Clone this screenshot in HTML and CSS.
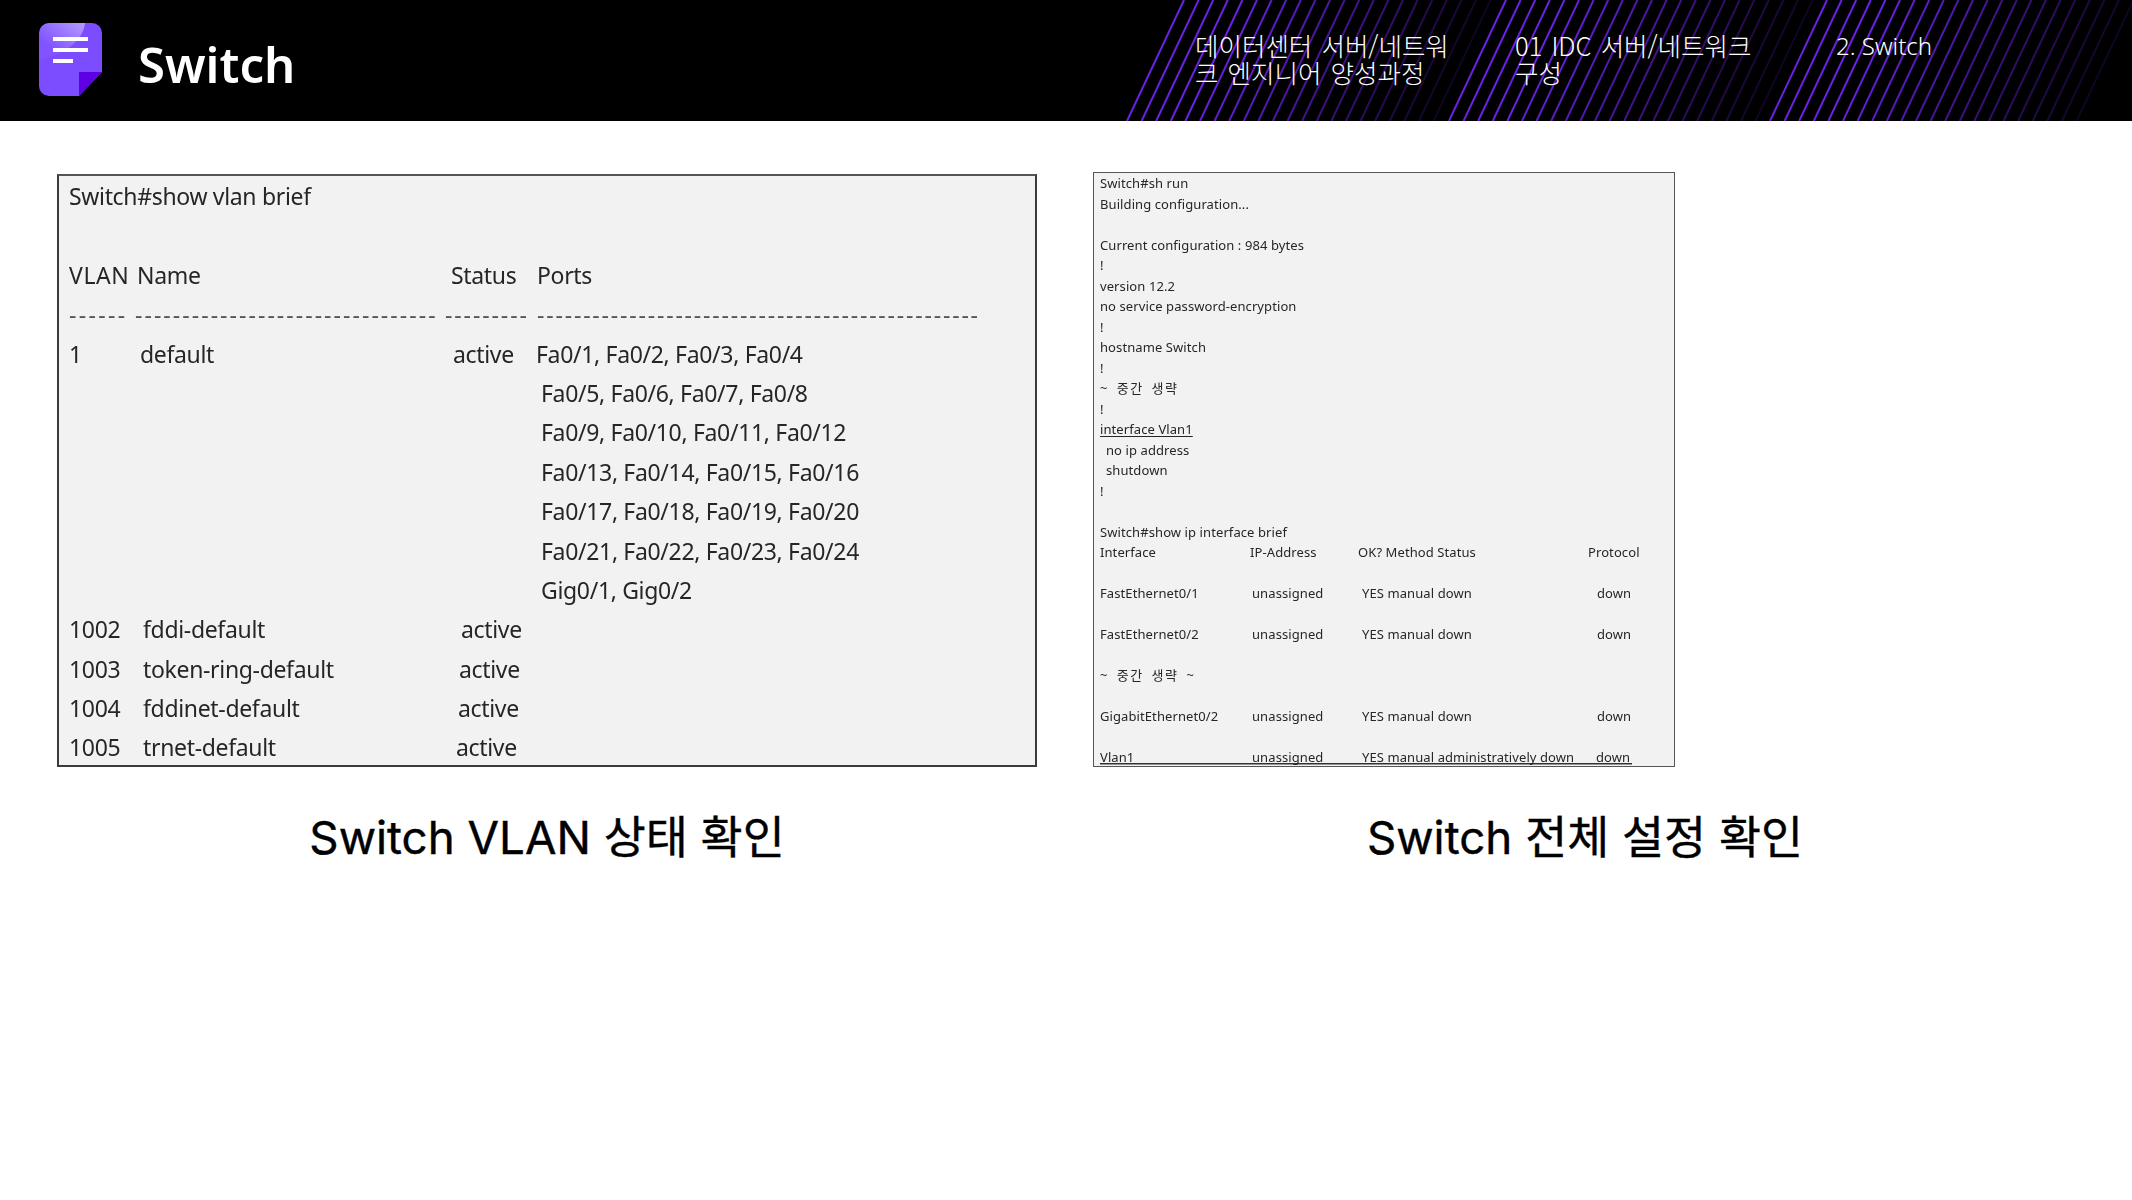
FILE: index.html
```html
<!DOCTYPE html>
<html lang="ko">
<head>
<meta charset="utf-8">
<title>Switch</title>
<link rel="stylesheet" href="styles.css">
</head>
<body>
<header class="topbar">
  <svg class="stripes" viewBox="0 0 2132 121" width="2132" height="121" aria-hidden="true">
    <defs>
      <g id="stripe-group" stroke="#6a22e6" stroke-width="2">
        <line x1="0" y1="121" x2="57" y2="0"/>
        <line x1="14.6" y1="121" x2="71.6" y2="0"/>
        <line x1="29.2" y1="121" x2="86.2" y2="0"/>
        <line x1="43.8" y1="121" x2="100.8" y2="0"/>
        <line x1="58.4" y1="121" x2="115.4" y2="0"/>
        <line x1="73" y1="121" x2="130" y2="0" opacity=".95"/>
        <line x1="87.6" y1="121" x2="144.6" y2="0" opacity=".9"/>
        <line x1="102.2" y1="121" x2="159.2" y2="0" opacity=".85"/>
        <line x1="116.8" y1="121" x2="173.8" y2="0" opacity=".8"/>
        <line x1="131.4" y1="121" x2="188.4" y2="0" opacity=".75"/>
        <line x1="146" y1="121" x2="203" y2="0" opacity=".7"/>
        <line x1="160.6" y1="121" x2="217.6" y2="0" opacity=".65"/>
        <line x1="175.2" y1="121" x2="232.2" y2="0" opacity=".6"/>
        <line x1="189.8" y1="121" x2="246.8" y2="0" opacity=".55"/>
        <line x1="204.4" y1="121" x2="261.4" y2="0" opacity=".5"/>
        <line x1="219" y1="121" x2="276" y2="0" opacity=".45"/>
        <line x1="233.6" y1="121" x2="290.6" y2="0" opacity=".4"/>
        <line x1="248.2" y1="121" x2="305.2" y2="0" opacity=".35"/>
        <line x1="262.8" y1="121" x2="319.8" y2="0" opacity=".3"/>
        <line x1="277.4" y1="121" x2="334.4" y2="0" opacity=".25"/>
        <line x1="292" y1="121" x2="349" y2="0" opacity=".2"/>
        <line x1="306.6" y1="121" x2="363.6" y2="0" opacity=".15"/>
      </g>
    </defs>
    <use href="#stripe-group" x="1127"/>
    <use href="#stripe-group" x="1449"/>
    <use href="#stripe-group" x="1770"/>
  </svg>
  <svg class="logo" viewBox="0 0 63 73" width="63" height="73" aria-hidden="true">
    <defs>
      <linearGradient id="shine" x1="1" y1="0" x2="0" y2="1">
        <stop offset="0" stop-color="#fff" stop-opacity=".45"/>
        <stop offset=".7" stop-color="#fff" stop-opacity=".04"/>
      </linearGradient>
    </defs>
    <path d="M10 0H53A10 10 0 0 1 63 10V49L40 73H10A10 10 0 0 1 0 63V10A10 10 0 0 1 10 0Z" fill="#7c4dff"/>
    <path d="M10 0H46C44 18 26 31 0 37V10A10 10 0 0 1 10 0Z" fill="url(#shine)"/>
    <path d="M40 49H63L40 73Z" fill="#5d00e4"/>
    <rect x="14" y="14" width="35" height="4" fill="#fff"/>
    <rect x="14" y="25" width="35" height="4" fill="#fff"/>
    <rect x="14" y="36" width="20" height="4" fill="#fff"/>
  </svg>
  <h1 class="title">Switch</h1>
  <nav class="crumbs">
    <div class="crumb crumb-a">데이터센터 서버/네트워크 엔지니어 양성과정</div>
    <div class="crumb crumb-b">01 IDC 서버/네트워크 구성</div>
    <div class="crumb crumb-c">2. Switch</div>
  </nav>
</header>
<main class="slide">
  <figure class="panel panel-left">
    <div class="term term-vlan">
      <div class="vrow">Switch#show vlan brief</div>
      <div class="vrow"></div>
      <div class="vrow vgrid"><span class="vl">VLAN</span><span>Name</span><span>Status</span><span>Ports</span></div>
      <div class="vrow vgrid dashes"><span class="d1">------</span><span class="d2">--------------------------------</span><span class="d3">---------</span><span class="d4">------------------------------------------------</span></div>
      <div class="vrow vgrid"><span>1</span><span class="n1">default</span><span class="a0">active</span><span class="p0">Fa0/1, Fa0/2, Fa0/3, Fa0/4</span></div>
      <div class="vrow vgrid"><span></span><span></span><span></span><span class="p1">Fa0/5, Fa0/6, Fa0/7, Fa0/8</span></div>
      <div class="vrow vgrid"><span></span><span></span><span></span><span class="p1">Fa0/9, Fa0/10, Fa0/11, Fa0/12</span></div>
      <div class="vrow vgrid"><span></span><span></span><span></span><span class="p1">Fa0/13, Fa0/14, Fa0/15, Fa0/16</span></div>
      <div class="vrow vgrid"><span></span><span></span><span></span><span class="p1">Fa0/17, Fa0/18, Fa0/19, Fa0/20</span></div>
      <div class="vrow vgrid"><span></span><span></span><span></span><span class="p1">Fa0/21, Fa0/22, Fa0/23, Fa0/24</span></div>
      <div class="vrow vgrid"><span></span><span></span><span></span><span class="p1">Gig0/1, Gig0/2</span></div>
      <div class="vrow vgrid"><span>1002</span><span class="n2">fddi-default</span><span class="a1">active</span></div>
      <div class="vrow vgrid"><span>1003</span><span class="n2">token-ring-default</span><span class="a2">active</span></div>
      <div class="vrow vgrid"><span>1004</span><span class="n2">fddinet-default</span><span class="a3">active</span></div>
      <div class="vrow vgrid"><span>1005</span><span class="n2">trnet-default</span><span class="a4">active</span></div>
    </div>
    <figcaption class="caption">Switch VLAN 상태 확인</figcaption>
  </figure>
  <figure class="panel panel-right">
    <div class="term term-conf">
      <div class="crow">Switch#sh run</div>
      <div class="crow">Building configuration...</div>
      <div class="crow"></div>
      <div class="crow">Current configuration : 984 bytes</div>
      <div class="crow">!</div>
      <div class="crow">version 12.2</div>
      <div class="crow">no service password-encryption</div>
      <div class="crow">!</div>
      <div class="crow">hostname Switch</div>
      <div class="crow">!</div>
      <div class="crow ko">~ 중간 생략</div>
      <div class="crow">!</div>
      <div class="crow"><u class="rule">interface Vlan1</u></div>
      <div class="crow indent">no ip address</div>
      <div class="crow indent">shutdown</div>
      <div class="crow">!</div>
      <div class="crow"></div>
      <div class="crow">Switch#show ip interface brief</div>
      <div class="crow cgrid"><span>Interface</span><span>IP-Address</span><span>OK? Method Status</span><span>Protocol</span></div>
      <div class="crow"></div>
      <div class="crow cgrid"><span>FastEthernet0/1</span><span class="i1">unassigned</span><span class="o1">YES manual down</span><span class="x1">down</span></div>
      <div class="crow"></div>
      <div class="crow cgrid"><span>FastEthernet0/2</span><span class="i1">unassigned</span><span class="o1">YES manual down</span><span class="x1">down</span></div>
      <div class="crow"></div>
      <div class="crow ko">~ 중간 생략 ~</div>
      <div class="crow"></div>
      <div class="crow cgrid"><span>GigabitEthernet0/2</span><span class="i1">unassigned</span><span class="o1">YES manual down</span><span class="x1">down</span></div>
      <div class="crow"></div>
      <div class="crow cgrid last"><span>Vlan1</span><span class="i1">unassigned</span><span class="o1">YES manual administratively down</span><span class="x2">down</span></div>
    </div>
    <figcaption class="caption">Switch 전체 설정 확인</figcaption>
  </figure>
</main>
</body>
</html>
```
FILE: styles.css
```css
* { box-sizing: border-box; }
html, body { margin: 0; padding: 0; background: #fff; }
body { width: 2132px; height: 1200px; overflow: hidden; font-family: "Noto Sans", "Noto Sans CJK KR", sans-serif; }

.topbar { position: relative; height: 121px; background: #000; display: flex; align-items: center; color: #fff; }
.stripes { position: absolute; left: 0; top: 0; }
.logo { position: relative; margin-left: 39px; margin-top: -2px; flex: none; }
.title { position: relative; margin: 7px 0 0 36px; font-size: 49px; line-height: 1; font-weight: 600; font-family: "Noto Sans", "Noto Sans CJK KR", sans-serif; }
.crumbs { position: relative; margin-left: auto; display: flex; align-self: flex-start; padding-top: 31px; }
.crumb { font-family: "Noto Sans CJK KR", "Noto Sans", sans-serif; font-weight: 300; font-size: 25.5px; line-height: 27px; word-spacing: 2px; word-break: break-all; }
.crumb-a { width: 320px; padding-right: 58px; }
.crumb-b { width: 321px; padding-right: 76px; }
.crumb-c { width: 296px; padding-top: 1px; font-family: "Noto Sans", sans-serif; font-size: 24px; word-spacing: 0; }

.slide { display: flex; gap: 56px; padding-left: 57px; align-items: flex-end; padding-top: 51px; }
.panel { margin: 0; }
.panel-left { width: 980px; }
.panel-right { width: 984px; }
.term { background: #f2f2f2; color: #262626; overflow: hidden; }
.term-vlan { height: 593px; border: 2px solid #3c3c3c; border-top-color: #555; font-size: 23px; letter-spacing: -.33px; padding: 1px 0 0 10px; }
.term-conf { width: 582px; height: 595px; border: 1.5px solid #555; font-size: 13px; letter-spacing: .09px; padding: 0 0 0 6px; }
.caption { margin: 44px 0 0; height: 54px; line-height: 54px; text-align: center; font-family: "Inter", "Noto Sans CJK KR", sans-serif; font-size: 45.7px; font-weight: 400; -webkit-text-stroke: .4px #000; color: #000; }

.vrow { height: 39.4px; line-height: 39.4px; white-space: nowrap; filter: blur(.35px); }
.vgrid { display: grid; grid-template-columns: 68px 314px 86px 1fr; }
.vl { letter-spacing: .6px; }
.dashes { color: #555; }
.d1 { letter-spacing: 2.35px; }
.d2 { margin-left: -2px; letter-spacing: 2.05px; }
.d3 { margin-left: -6px; letter-spacing: 1.9px; }
.d4 { letter-spacing: 1.82px; }
.n1 { padding-left: 3px; }
.n2 { padding-left: 6px; }
.a0 { padding-left: 2px; }
.a1 { padding-left: 10px; }
.a2 { padding-left: 8px; }
.a3 { padding-left: 7px; }
.a4 { padding-left: 5px; }
.p0 { margin-left: -1px; }
.p1 { padding-left: 4px; }

.crow { height: 20.5px; line-height: 20.5px; white-space: nowrap; filter: blur(.3px); }
.ko { letter-spacing: 1.5px; word-spacing: 3px; }
.indent { padding-left: 6px; }
.rule { text-decoration-thickness: 1px; text-underline-offset: 2px; }
.cgrid { display: grid; grid-template-columns: 150px 108px 230px 1fr; }
.i1 { padding-left: 2px; }
.o1 { padding-left: 4px; }
.x1 { padding-left: 9px; }
.x2 { padding-left: 8px; }
.last { background: linear-gradient(#333, #333) left bottom 3px / 532px 1.5px no-repeat; }
```
